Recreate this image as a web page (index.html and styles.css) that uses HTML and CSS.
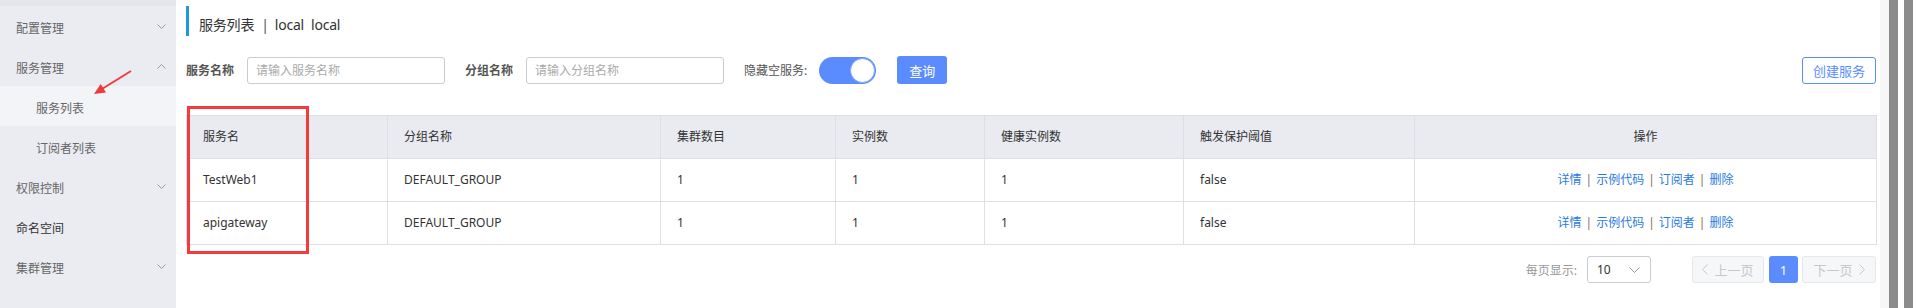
FILE: index.html
```html
<!DOCTYPE html>
<html lang="zh-CN">
<head>
    <meta charset="UTF-8">
    <meta name="viewport" content="width=device-width, initial-scale=1.0">
    <title>服务列表</title>
    <link rel="stylesheet" href="styles.css">
</head>
<body>
<div class="page">
    <aside class="sidebar">
        <div class="nav-top"></div>
        <div class="nav-item">配置管理
            <svg class="chev" width="9" height="5" viewBox="0 0 9 5"><polyline points="0.5,0.5 4.5,4.5 8.5,0.5"/></svg>
        </div>
        <div class="nav-item">服务管理
            <svg class="chev" width="9" height="5" viewBox="0 0 9 5"><polyline points="0.5,4.5 4.5,0.5 8.5,4.5"/></svg>
        </div>
        <div class="nav-sub active">服务列表</div>
        <div class="nav-sub">订阅者列表</div>
        <div class="nav-item">权限控制
            <svg class="chev" width="9" height="5" viewBox="0 0 9 5"><polyline points="0.5,0.5 4.5,4.5 8.5,0.5"/></svg>
        </div>
        <div class="nav-item leaf">命名空间</div>
        <div class="nav-item">集群管理
            <svg class="chev" width="9" height="5" viewBox="0 0 9 5"><polyline points="0.5,0.5 4.5,4.5 8.5,0.5"/></svg>
        </div>
    </aside>

    <main class="main">
        <div class="page-title">
            <span>服务列表</span>
            <span class="sep">|</span>
            <span>local</span>
            <span class="env">local</span>
        </div>

        <form class="search-bar">
            <label class="field-label">服务名称</label>
            <input class="text-input" type="text" placeholder="请输入服务名称">
            <label class="field-label">分组名称</label>
            <input class="text-input" type="text" placeholder="请输入分组名称">
            <span class="switch-label">隐藏空服务:</span>
            <span class="switch"><span class="knob"></span></span>
            <button type="button" class="btn-primary">查询</button>
            <button type="button" class="btn-outline">创建服务</button>
        </form>

        <table class="service-table">
            <colgroup>
                <col style="width:201px">
                <col style="width:273px">
                <col style="width:175px">
                <col style="width:149px">
                <col style="width:199px">
                <col style="width:231px">
                <col>
            </colgroup>
            <thead>
                <tr>
                    <th>服务名</th>
                    <th>分组名称</th>
                    <th>集群数目</th>
                    <th>实例数</th>
                    <th>健康实例数</th>
                    <th>触发保护阈值</th>
                    <th class="ops">操作</th>
                </tr>
            </thead>
            <tbody>
                <tr>
                    <td>TestWeb1</td>
                    <td>DEFAULT_GROUP</td>
                    <td>1</td>
                    <td>1</td>
                    <td>1</td>
                    <td>false</td>
                    <td class="ops"><a>详情</a><i>|</i><a>示例代码</a><i>|</i><a>订阅者</a><i>|</i><a>删除</a></td>
                </tr>
                <tr>
                    <td>apigateway</td>
                    <td>DEFAULT_GROUP</td>
                    <td>1</td>
                    <td>1</td>
                    <td>1</td>
                    <td>false</td>
                    <td class="ops"><a>详情</a><i>|</i><a>示例代码</a><i>|</i><a>订阅者</a><i>|</i><a>删除</a></td>
                </tr>
            </tbody>
        </table>

        <div class="pagination">
            <span class="page-size-label">每页显示:</span>
            <span class="page-size">10
                <svg width="11" height="6" viewBox="0 0 11 6"><polyline points="0.5,0.5 5.5,5.5 10.5,0.5"/></svg>
            </span>
            <span class="page-btn prev">
                <svg width="6" height="11" viewBox="0 0 6 11"><polyline points="5.5,0.5 0.5,5.5 5.5,10.5"/></svg>上一页
            </span>
            <span class="page-num">1</span>
            <span class="page-btn next">下一页
                <svg width="6" height="11" viewBox="0 0 6 11"><polyline points="0.5,0.5 5.5,5.5 0.5,10.5"/></svg>
            </span>
        </div>
    </main>

    <div class="scroll-strip">
        <span class="strip-edge"></span>
        <span class="strip-bar"></span>
        <span class="strip-gap"></span>
        <span class="strip-bar"></span>
    </div>

    <!-- annotations drawn over the screenshot -->
    <svg class="mark-arrow" width="55" height="40" viewBox="0 0 55 40">
        <line x1="46" y1="9" x2="17" y2="27"/>
        <polygon points="9,32 21,30.4 15.7,21.9"/>
    </svg>
    <div class="mark-box"></div>
</div>
</body>
</html>
```

FILE: styles.css
```css
body {
    margin: 0;
    font-family: "Noto Sans", "Noto Sans CJK SC", sans-serif;
    font-size: 12px;
    color: #333;
    background: #fff;
}
.page {
    position: relative;
    display: flex;
    width: 1916px;
    height: 308px;
    overflow: hidden;
}

/* sidebar */
.sidebar {
    width: 176px;
    flex-shrink: 0;
    background: #eaecf1;
    color: #666;
}
.nav-top {
    height: 6px;
    background: #e4e6eb;
}
.nav-item,
.nav-sub {
    display: flex;
    align-items: center;
    justify-content: space-between;
    height: 40px;
    box-sizing: border-box;
    padding: 5px 10px 0 16px;
    line-height: 20px;
}
.nav-item .chev {
    margin-top: -5px;
}
.nav-sub {
    padding-left: 36px;
}
.nav-sub.active {
    background: #f3f4f7;
}
.nav-item.leaf {
    color: #333;
}
.chev {
    fill: none;
    stroke: #999;
    stroke-width: 1;
}

/* main area */
.main {
    width: 1704px;
    flex-shrink: 0;
    box-sizing: border-box;
    padding: 6px 3px 0 10px;
}
.page-title {
    display: flex;
    gap: 7px;
    height: 30px;
    box-sizing: border-box;
    padding: 9px 0 0 10px;
    border-left: 3px solid #1b9ad6;
    font-size: 14px;
    line-height: 20px;
    color: #333;
    letter-spacing: -0.2px;
}
.page-title .sep {
    color: #555;
    margin-right: -1px;
}

.search-bar {
    display: flex;
    align-items: center;
    height: 28px;
    margin-top: 20px;
}
.field-label {
    font-weight: bold;
    color: #555;
    margin-right: 13px;
}
.text-input {
    width: 198px;
    height: 27px;
    box-sizing: border-box;
    margin-right: 20px;
    padding: 0 8px;
    border: 1px solid #c9ccd4;
    border-radius: 3px;
    font-family: inherit;
    font-size: 12px;
    outline: none;
}
.text-input::placeholder {
    color: #aaa;
}
.switch-label {
    color: #555;
    margin-right: 12px;
}
.switch {
    display: flex;
    justify-content: flex-end;
    align-items: center;
    width: 57px;
    height: 27px;
    box-sizing: border-box;
    padding: 1px;
    border-radius: 14px;
    background: #5a8cff;
}
.knob {
    width: 25px;
    height: 25px;
    box-sizing: border-box;
    border-radius: 50%;
    border: 1px solid #7ea5ff;
    background: #fff;
}
.btn-primary {
    width: 50px;
    height: 28px;
    margin-left: 21px;
    border: none;
    border-radius: 3px;
    background: #5a8cff;
    color: #fff;
    font-family: inherit;
    font-size: 13px;
    padding: 0;
}
.btn-outline {
    width: 74px;
    height: 27px;
    margin-left: auto;
    margin-right: 1px;
    border: 1px solid #5a8cff;
    border-radius: 3px;
    background: #fff;
    color: #5a8cff;
    font-family: inherit;
    font-size: 13px;
    padding: 0;
}

/* table */
.service-table {
    width: 1691px;
    margin-top: 31px;
    border-collapse: collapse;
    table-layout: fixed;
    font-size: 12px;
}
.service-table th,
.service-table td {
    height: 42px;
    padding: 0 16px;
    border: 1px solid #dcdfe5;
    text-align: left;
    font-weight: normal;
    color: #333;
    line-height: 20px;
}
.service-table th {
    background: #e9ebf0;
}
.service-table .ops {
    text-align: center;
}
.ops a {
    color: #2a7ae2;
}
.ops i {
    font-style: normal;
    color: #8a6a5a;
    margin: 0 4px;
}

/* pagination */
.pagination {
    display: flex;
    justify-content: flex-end;
    align-items: center;
    height: 27px;
    margin-top: 11px;
    margin-right: 1px;
    color: #999;
}
.page-size-label {
    margin-right: 10px;
}
.page-size {
    display: flex;
    align-items: center;
    justify-content: space-between;
    width: 64px;
    height: 27px;
    box-sizing: border-box;
    padding: 0 10px 0 9px;
    border: 1px solid #c9ccd4;
    border-radius: 3px;
    color: #333;
    margin-right: 41px;
}
.page-size svg {
    fill: none;
    stroke: #999;
}
.page-btn {
    display: flex;
    align-items: center;
    justify-content: center;
    gap: 6px;
    height: 27px;
    box-sizing: border-box;
    border: 1px solid #e5e7eb;
    border-radius: 3px;
    background: #f6f7f9;
    color: #c6c8cc;
    font-size: 13px;
}
.page-btn svg {
    fill: none;
    stroke: #c6c8cc;
}
.page-btn.prev {
    width: 72px;
}
.page-btn.next {
    width: 74px;
}
.page-num {
    display: flex;
    align-items: center;
    justify-content: center;
    width: 29px;
    height: 27px;
    margin: 0 4px 0 5px;
    border-radius: 3px;
    background: #5a8cff;
    color: #fff;
    font-size: 13px;
}

/* right strip */
.scroll-strip {
    display: flex;
    flex: 1;
}
.strip-edge {
    width: 9px;
    background: #f7f7f7;
}
.strip-bar {
    width: 9px;
    background: #8b8b8b;
}
.strip-gap {
    width: 6px;
    background: #fff;
}

/* red annotations */
.mark-arrow {
    position: absolute;
    left: 85px;
    top: 62px;
}
.mark-arrow line {
    stroke: #ee3b3b;
    stroke-width: 2;
}
.mark-arrow polygon {
    fill: #ee3b3b;
}
.mark-box {
    position: absolute;
    left: 187px;
    top: 106px;
    width: 122px;
    height: 148px;
    box-sizing: border-box;
    border: 3px solid #f33b3b;
}
```
